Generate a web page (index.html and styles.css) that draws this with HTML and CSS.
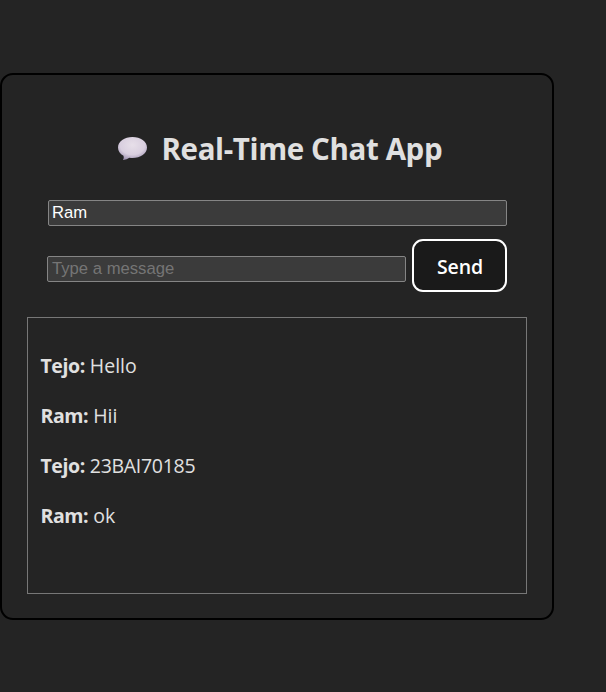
FILE: index.html
```
<!DOCTYPE html>
<html lang="en">
<head>
<meta charset="utf-8">
<title>Real-Time Chat App</title>
<link rel="stylesheet" href="styles.css">
</head>
<body>
<main class="app">
  <h2 class="title">
    <svg class="bubble" viewBox="0 0 30 24" aria-hidden="true">
      <defs>
        <radialGradient id="shade" cx="0.5" cy="0.35" r="0.65">
          <stop offset="0" stop-color="#e7dfe9"/>
          <stop offset="0.65" stop-color="#d9cfdf"/>
          <stop offset="1" stop-color="#a397b5"/>
        </radialGradient>
      </defs>
      <path fill="url(#shade)" d="M14.500 0C22.500 0 29 4.500 29 10.500S22.500 21 14.500 21Q13 21 11.400 20.700Q9 22.500 5 23Q6.300 21 5.500 18.700C2 17 0 14.200 0 10.500C0 4.500 6.500 0 14.500 0Z"/>
    </svg>
    <span class="title-text">Real-Time Chat App</span>
  </h2>
  <input class="field name" type="text" value="Ram">
  <div class="compose">
    <input class="field message" type="text" placeholder="Type a message">
    <button class="send">Send</button>
  </div>
  <section class="log">
    <p><strong>Tejo:</strong><span>Hello</span></p>
    <p><strong>Ram:</strong><span>Hii</span></p>
    <p><strong>Tejo:</strong><span class="digits">23BAI70185</span></p>
    <p><strong>Ram:</strong><span>ok</span></p>
  </section>
</main>
</body>
</html>
```
FILE: styles.css
```
* { box-sizing: border-box; }
body {
  margin: 0;
  padding-top: 73px;
  height: 692px;
  overflow: hidden;
  background: #242424;
  color: #e0e0e0;
  font-family: "Open Sans", sans-serif;
}
.app {
  width: 554px;
  height: 547px;
  padding: 51px 25px 0;
  border: 2px solid #000;
  border-radius: 13px;
}
.title {
  display: flex;
  align-items: center;
  gap: 14px;
  height: 45px;
  margin: 0 0 29px 90px;
  font-size: 29.500px;
  line-height: 45px;
  letter-spacing: -0.38px;
  white-space: nowrap;
}
.bubble { width: 30px; height: 24px; margin-left: 0.500px; }
.field {
  display: block;
  height: 26px;
  margin: 0;
  padding: 0 4px 0 3px;
  border: 1px solid #858585;
  border-radius: 2px;
  background: #3b3b3b;
  color: #fff;
  font: 16.670px "Liberation Sans", sans-serif;
}
.field::placeholder { color: #757575; opacity: 1; }
.name { width: 459px; margin-left: 21px; }
.compose {
  display: flex;
  align-items: center;
  gap: 6px;
  height: 53px;
  margin: 13px 0 25px 20px;
}
.message { width: 359px; margin-top: 7px; padding-left: 4px; }
.send {
  width: 95px;
  height: 53px;
  padding: 1px 0 0 1px;
  border: 2px solid #fff;
  border-radius: 11px;
  background: #1a1a1a;
  color: #fff;
  font: 600 19.500px "Open Sans", sans-serif;
  letter-spacing: -0.150px;
}
.log {
  width: 500px;
  height: 277px;
  padding: 35px 12.500px 0;
  border: 1px solid #777;
}
.log p {
  display: flex;
  gap: 5px;
  margin: 0 0 24px;
  font-size: 19.500px;
  line-height: 26px;
}
.log strong { letter-spacing: -0.420px; }
.digits { letter-spacing: -0.300px; }
```
